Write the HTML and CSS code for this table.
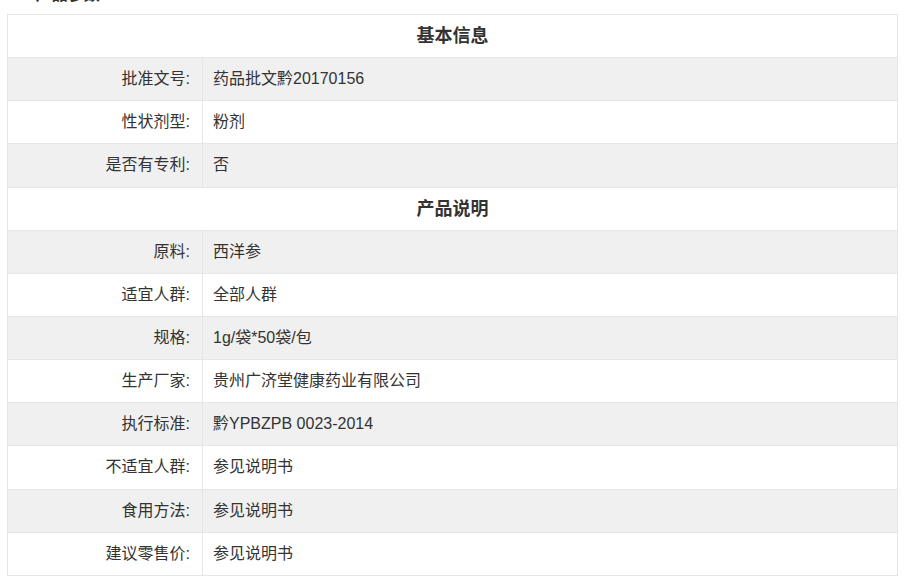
FILE: index.html
```html
<!DOCTYPE html>
<html lang="zh-CN">
<head>
<meta charset="utf-8">
<link rel="stylesheet" href="styles.css">
</head>
<body>
<div class="page">
  <h3 class="section-title"><span class="dot">■</span>产品参数</h3>
  <table class="spec">
    <colgroup><col class="col-k"><col class="col-v"></colgroup>
    <tr class="head"><td colspan="2">基本信息</td></tr>
    <tr class="alt"><td class="k">批准文号:</td><td class="v">药品批文黔20170156</td></tr>
    <tr><td class="k">性状剂型:</td><td class="v">粉剂</td></tr>
    <tr class="alt"><td class="k">是否有专利:</td><td class="v">否</td></tr>
    <tr class="head"><td colspan="2">产品说明</td></tr>
    <tr class="alt"><td class="k">原料:</td><td class="v">西洋参</td></tr>
    <tr><td class="k">适宜人群:</td><td class="v">全部人群</td></tr>
    <tr class="alt"><td class="k">规格:</td><td class="v">1g/袋*50袋/包</td></tr>
    <tr><td class="k">生产厂家:</td><td class="v">贵州广济堂健康药业有限公司</td></tr>
    <tr class="alt"><td class="k">执行标准:</td><td class="v">黔YPBZPB 0023-2014</td></tr>
    <tr><td class="k">不适宜人群:</td><td class="v">参见说明书</td></tr>
    <tr class="alt"><td class="k">食用方法:</td><td class="v">参见说明书</td></tr>
    <tr><td class="k">建议零售价:</td><td class="v">参见说明书</td></tr>
  </table>
</div>
</body>
</html>
```
FILE: styles.css
```css
html, body {
  margin: 0;
  padding: 0;
  background: #fff;
}
body {
  font-family: "Liberation Sans", "Noto Sans CJK SC", sans-serif;
  color: #333;
  font-size: 16px;
}
.page {
  padding: 0 6px 0 7px;
}
.section-title {
  margin: -12px 0 0 10px;
  height: 14px;
  font-size: 16px;
  line-height: 14px;
  font-weight: bold;
  color: #333;
  overflow: hidden;
}
.section-title .dot {
  font-size: 8px;
  margin-right: 14px;
  vertical-align: middle;
}
.spec {
  width: 891px;
  border-collapse: collapse;
  margin-top: 12px;
  table-layout: fixed;
}
.col-k {
  width: 195px;
}
.spec td {
  border: 1px solid #e6e6e6;
  height: 42.15px;
  padding: 0;
  line-height: 20px;
}
.spec tr.head td {
  text-align: center;
  font-weight: bold;
  font-size: 18px;
  background: #fff;
}
.spec tr.alt td {
  background: #f0f0f0;
}
.spec td.k {
  text-align: right;
  padding-right: 12px;
}
.spec td.v {
  padding-left: 10px;
}
```
